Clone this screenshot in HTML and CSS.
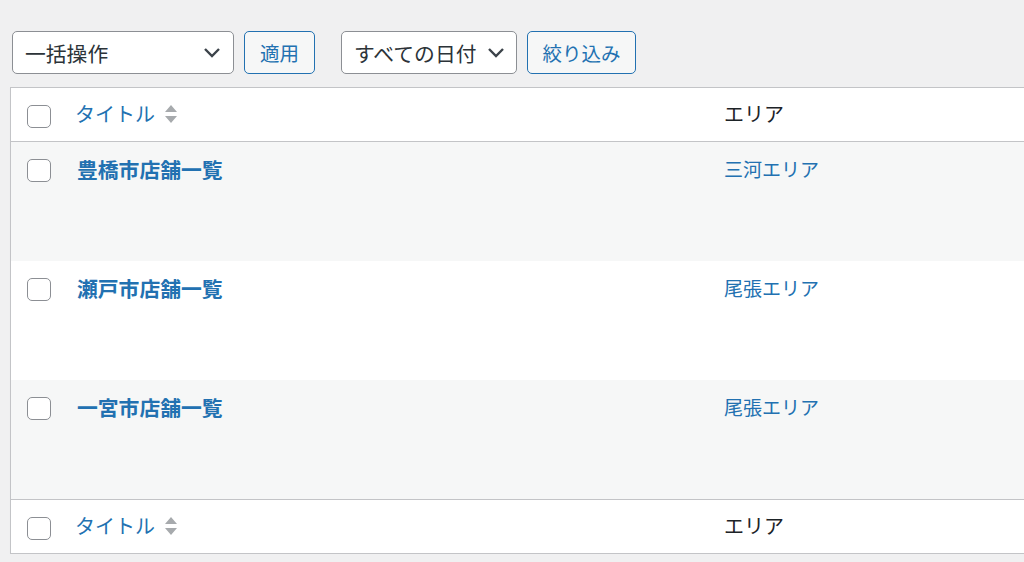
FILE: index.html
```html
<!DOCTYPE html>
<html lang="ja">
<head>
<meta charset="utf-8">
<link rel="stylesheet" href="styles.css">
</head>
<body>
<div class="page">
  <div class="tablenav">
    <div class="actions">
      <div class="select select-bulk">
        <span>一括操作</span>
        <svg class="chev" width="18" height="11" viewBox="0 0 18 11"><path d="M2 2 L9 9 L16 2" fill="none" stroke="#3c434a" stroke-width="2.4"/></svg>
      </div>
      <button class="btn btn-apply">適用</button>
    </div>
    <div class="actions">
      <div class="select select-date">
        <span>すべての日付</span>
        <svg class="chev" width="18" height="11" viewBox="0 0 18 11"><path d="M2 2 L9 9 L16 2" fill="none" stroke="#3c434a" stroke-width="2.4"/></svg>
      </div>
      <button class="btn btn-filter">絞り込み</button>
    </div>
  </div>

  <div class="table">
    <div class="row head">
      <div class="cell check"><span class="cb"></span></div>
      <div class="cell title"><a class="sort">タイトル<svg class="sorticon" width="14" height="22" viewBox="0 0 14 22"><path d="M7 2 L13 9 L1 9 Z M1 13 L13 13 L7 20 Z" fill="#a7aaad"/></svg></a></div>
      <div class="cell area">エリア</div>
    </div>
    <div class="row item alt">
      <div class="cell check"><span class="cb"></span></div>
      <div class="cell title"><a class="post">豊橋市店舗一覧</a></div>
      <div class="cell area"><a class="term">三河エリア</a></div>
    </div>
    <div class="row item">
      <div class="cell check"><span class="cb"></span></div>
      <div class="cell title"><a class="post">瀬戸市店舗一覧</a></div>
      <div class="cell area"><a class="term">尾張エリア</a></div>
    </div>
    <div class="row item alt">
      <div class="cell check"><span class="cb"></span></div>
      <div class="cell title"><a class="post">一宮市店舗一覧</a></div>
      <div class="cell area"><a class="term">尾張エリア</a></div>
    </div>
    <div class="row head foot">
      <div class="cell check"><span class="cb"></span></div>
      <div class="cell title"><a class="sort">タイトル<svg class="sorticon" width="14" height="22" viewBox="0 0 14 22"><path d="M7 2 L13 9 L1 9 Z M1 13 L13 13 L7 20 Z" fill="#a7aaad"/></svg></a></div>
      <div class="cell area">エリア</div>
    </div>
  </div>
</div>
</body>
</html>
```

FILE: styles.css
```css
* { box-sizing: border-box; }
html, body {
  margin: 0;
  padding: 0;
  background: #f0f0f1;
}
body {
  font-family: "Noto Sans CJK JP", "Noto Sans", sans-serif;
  color: #1d2327;
}
.page {
  padding: 31px 0 0 10px;
}
.tablenav {
  display: flex;
  gap: 26px;
  padding-left: 2px;
  height: 43px;
  margin-bottom: 13px;
}
.actions {
  display: flex;
  gap: 10px;
}
.select {
  height: 43px;
  border: 1px solid #8c8f94;
  border-radius: 5px;
  background: #fff;
  display: flex;
  align-items: center;
  justify-content: space-between;
  padding: 0 12px 0 12px;
  font-size: 20.8px;
  color: #2c3338;
}
.select-bulk { width: 222px; }
.select-date { width: 176px; padding-right: 11px; }
.select-date span { margin-right: 6px; }
.chev { flex: none; }
.btn {
  height: 43px;
  border: 1px solid #2271b1;
  border-radius: 5px;
  background: #f6f7f7;
  color: #2271b1;
  font-family: inherit;
  font-size: 19.5px;
  padding: 0;
  display: flex;
  align-items: center;
  justify-content: center;
}
.btn-apply { width: 71px; }
.btn-filter { width: 109px; }

.table {
  border: 1px solid #c3c4c7;
  border-right: none;
  background: #fff;
  box-shadow: 0 1px 1px rgba(0,0,0,0.04);
}
.row {
  display: grid;
  grid-template-columns: 53px 660px 1fr;
}
.row.head {
  height: 54px;
  border-bottom: 1px solid #c3c4c7;
}
.row.foot {
  border-bottom: none;
  border-top: 1px solid #c3c4c7;
  height: 54px;
}
.row.item {
  height: 119px;
}
.row.alt { background: #f6f7f7; }
.cell { display: flex; }
.check { padding: 17px 0 0 16px; }
.cb {
  display: block;
  width: 24px;
  height: 23px;
  border: 1.5px solid #8c8f94;
  border-radius: 5px;
  background: #fff;
}
.head .title, .head .area {
  align-items: center;
  padding-bottom: 2px;
}
.head .title { padding-left: 11px; }
.sort {
  color: #2271b1;
  font-size: 20px;
  display: flex;
  align-items: center;
  gap: 9px;
}
.head .area {
  font-size: 20px;
  color: #1d2327;
}
.item .title { padding: 12px 0 0 13px; }
.item .area { padding-top: 13px; }
.post {
  color: #2271b1;
  font-weight: 700;
  font-size: 20.8px;
}
.term {
  color: #2271b1;
  font-size: 19px;
}
```
